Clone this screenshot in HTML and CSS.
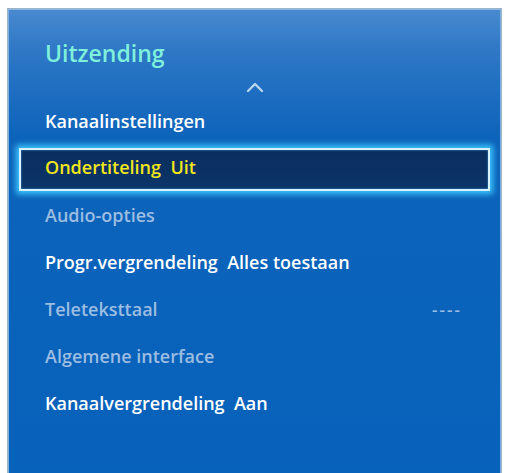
FILE: index.html
```html
<!DOCTYPE html>
<html>
<head>
<meta charset="utf-8">
<link rel="stylesheet" href="styles.css">
</head>
<body>
<div class="panel">
  <div class="title">Uitzending</div>
  <div class="caret">
    <svg width="20" height="12" viewBox="0 0 20 12"><path d="M3 10 L10 3 L17 10" fill="none" stroke="#b8d4ee" stroke-width="2.4" stroke-linecap="round" stroke-linejoin="round"/></svg>
  </div>
  <ul class="menu">
    <li class="item">Kanaalinstellingen</li>
    <li class="item selected">Ondertiteling&nbsp; Uit</li>
    <li class="item dim">Audio-opties</li>
    <li class="item">Progr.vergrendeling&nbsp; Alles toestaan</li>
    <li class="item dim"><span>Teleteksttaal</span><span class="value">----</span></li>
    <li class="item dim">Algemene interface</li>
    <li class="item">Kanaalvergrendeling&nbsp; Aan</li>
  </ul>
</div>
</body>
</html>
```
FILE: styles.css
```css
html, body {
  margin: 0;
  padding: 0;
  background: #ffffff;
  overflow: hidden;
}
body {
  width: 507px;
  height: 473px;
  font-family: "Open Sans", "DejaVu Sans", sans-serif;
}
.panel {
  margin: 8px 5px 0 7px;
  height: 470px;
  box-sizing: border-box;
  border: 1px solid #9fb3c8;
  border-bottom: none;
  background: linear-gradient(to bottom, #4a8ad0 0px, #2f78c6 40px, #1b6cc0 90px, #0d63ba 130px, #0762bb 100%);
  box-shadow: inset 1px 0 0 #7fb0e2, inset -1px 0 0 #7fb0e2, inset 0 1px 0 #8ab8e6;
  display: flex;
  flex-direction: column;
}
.title {
  margin: 27px 0 0 37px;
  font-size: 23px;
  font-weight: 600;
  color: #7ff0dc;
  line-height: 34px;
  height: 34px;
}
.caret {
  display: flex;
  justify-content: center;
  margin-top: 11px;
  height: 18px;
}
.menu {
  list-style: none;
  margin: 0;
  padding: 0;
}
.item {
  height: 47px;
  margin: 0 11px;
  padding: 0 30px 3px 26px;
  box-sizing: border-box;
  display: flex;
  align-items: center;
  justify-content: space-between;
  font-size: 18px;
  font-weight: 600;
  color: #ffffff;
  white-space: nowrap;
}
.item.dim {
  color: #9cbde2;
}
.item.selected {
  height: 43px;
  margin: 2px 11px;
  padding-left: 24px;
  padding-bottom: 6px;
  border: 2px solid #d6f2ff;
  background: linear-gradient(to bottom, #0a2d5e, #0c3569);
  color: #f2e61c;
  box-shadow: 0 0 6px 3px #3ec8ff, inset 0 0 2px #56a8e0;
}
.value {
  font-size: 17px;
  letter-spacing: 2px;
  margin-right: -2px;
  color: #9cbde2;
}
```
